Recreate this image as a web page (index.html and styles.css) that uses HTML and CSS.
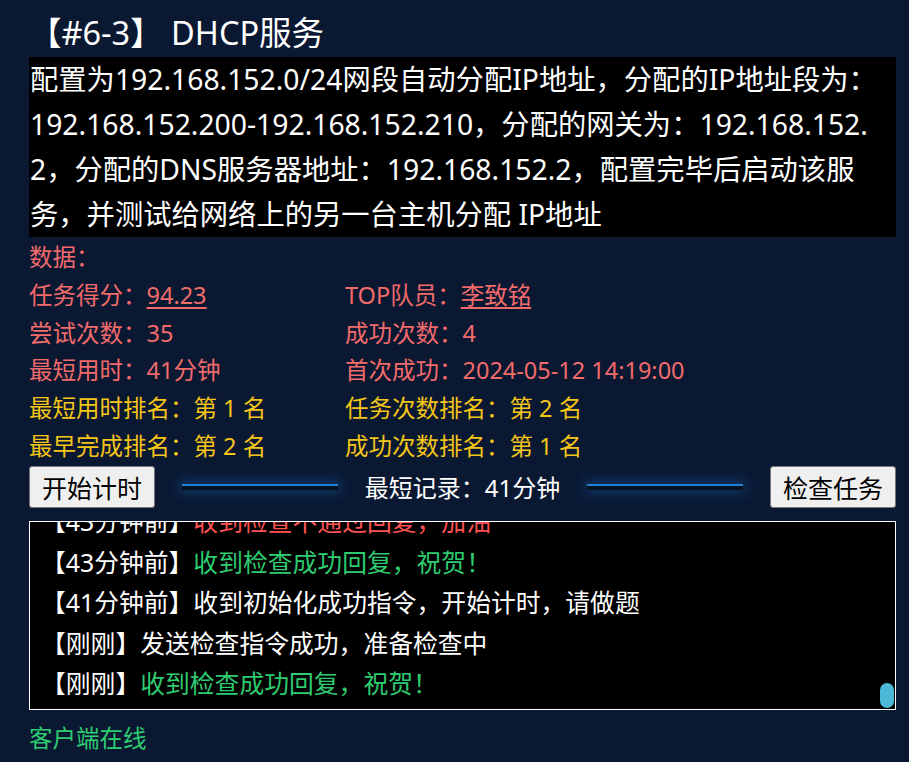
FILE: index.html
```html
<!DOCTYPE html>
<html lang="zh-CN">
<head>
<meta charset="utf-8">
<title>DHCP服务</title>
<link rel="stylesheet" href="styles.css">
</head>
<body>
<div class="page">
  <h1 class="title">【#6-3】 DHCP服务</h1>
  <div class="desc">配置为192.168.152.0/24网段自动分配IP地址，分配的IP地址段为：192.168.152.200-192.168.152.210，分配的网关为：192.168.152.2，分配的DNS服务器地址：192.168.152.2，配置完毕后启动该服务，并测试给网络上的另一台主机分配 IP地址</div>
  <div class="stats">
    <div class="stat full red">数据：</div>
    <div class="stat red">任务得分：<a class="link" href="#">94.23</a></div>
    <div class="stat red">TOP队员：<a class="link" href="#">李致铭</a></div>
    <div class="stat red">尝试次数：35</div>
    <div class="stat red">成功次数：4</div>
    <div class="stat red">最短用时：41分钟</div>
    <div class="stat red">首次成功：2024-05-12 14:19:00</div>
    <div class="stat yellow">最短用时排名：第 1 名</div>
    <div class="stat yellow">任务次数排名：第 2 名</div>
    <div class="stat yellow">最早完成排名：第 2 名</div>
    <div class="stat yellow">成功次数排名：第 1 名</div>
  </div>
  <div class="actions">
    <button class="btn">开始计时</button>
    <span class="glow-line"></span>
    <span class="record">最短记录：41分钟</span>
    <span class="glow-line"></span>
    <button class="btn">检查任务</button>
  </div>
  <div class="log">
    <div class="log-list">
      <div class="log-line"><span class="tag">【43分钟前】</span><span class="msg-red">收到检查不通过回复，加油</span></div>
      <div class="log-line"><span class="tag">【43分钟前】</span><span class="msg-green">收到检查成功回复，祝贺！</span></div>
      <div class="log-line"><span class="tag">【41分钟前】</span><span class="msg-white">收到初始化成功指令，开始计时，请做题</span></div>
      <div class="log-line"><span class="tag">【刚刚】</span><span class="msg-white">发送检查指令成功，准备检查中</span></div>
      <div class="log-line"><span class="tag">【刚刚】</span><span class="msg-green">收到检查成功回复，祝贺！</span></div>
    </div>
    <span class="thumb"></span>
  </div>
  <div class="status">客户端在线</div>
</div>
</body>
</html>
```

FILE: styles.css
```css
* { box-sizing: border-box; }
html, body {
  margin: 0;
  padding: 0;
  background: #0a1832;
}
body {
  font-family: "Noto Sans", "Noto Sans CJK SC", sans-serif;
  color: #ffffff;
}
.page {
  width: 909px;
  height: 762px;
  padding: 10px 13px 0 29px;
}
.title {
  margin: 0;
  font-size: 32.5px;
  font-weight: normal;
  line-height: 46px;
  padding-bottom: 1px;
  color: #ffffff;
}
.desc {
  background: #000000;
  color: #ffffff;
  font-size: 28.3px;
  line-height: 45px;
  padding: 0 16px 0 1px;
  word-break: break-all;
}
.stats {
  display: grid;
  grid-template-columns: 316px 1fr;
  margin-top: 2px;
  font-size: 23.5px;
  line-height: 37.8px;
}
.stat.full { grid-column: 1 / -1; }
.red { color: #f26b6b; }
.yellow { color: #f5c518; }
.link {
  color: #f26b6b;
  text-decoration: underline;
  text-underline-offset: 3px;
}
.actions {
  display: flex;
  align-items: center;
  gap: 27px;
  height: 42px;
}
.btn {
  width: 126px;
  height: 42px;
  flex: none;
  font-family: "Noto Sans", "Noto Sans CJK SC", sans-serif;
  font-size: 25px;
  color: #000000;
  background: #efefef;
  border: 1px solid #767676;
  border-radius: 3px;
  padding: 0;
}
.glow-line {
  flex: 1;
  height: 6px;
  border-top: 2px solid #1e80d8;
  background: #06121f;
  box-shadow: 0 0 14px 3px rgba(30, 128, 216, 0.35);
}
.record {
  font-size: 24px;
  color: #ffffff;
  white-space: nowrap;
}
.log {
  position: relative;
  margin-top: 13px;
  height: 189px;
  border: 1px solid #ffffff;
  background: #000000;
  overflow: hidden;
}
.log-list {
  height: 100%;
  display: flex;
  flex-direction: column;
  justify-content: flex-end;
  padding: 0 10px 5px 11px;
  font-size: 24.8px;
  line-height: 40.5px;
}
.log-line { white-space: nowrap; }
.tag { color: #ffffff; }
.msg-red { color: #ff5252; }
.msg-green { color: #2ecc71; }
.msg-white { color: #ffffff; }
.thumb {
  position: absolute;
  right: 1px;
  bottom: 1px;
  width: 14px;
  height: 25px;
  border-radius: 7px;
  background: #4ab8d6;
}
.status {
  margin-top: 10px;
  font-size: 23.5px;
  line-height: 36px;
  color: #2ecc71;
}
```
